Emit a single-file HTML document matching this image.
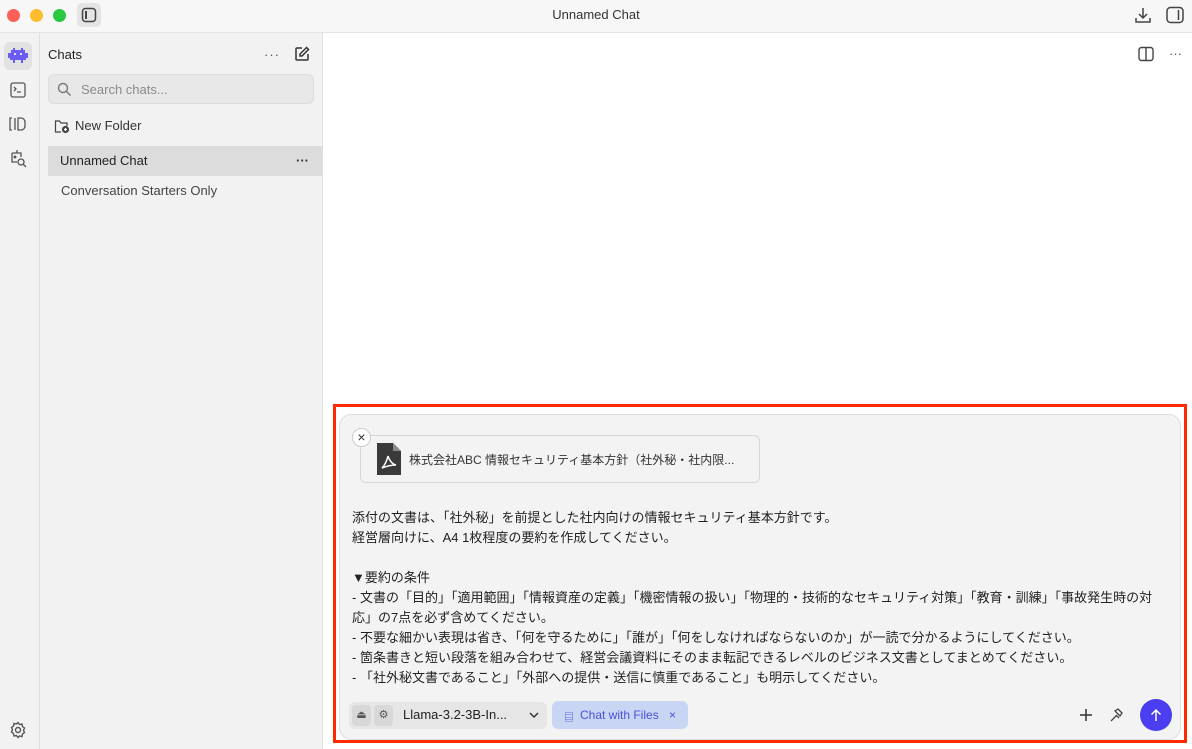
<!DOCTYPE html>
<html><head><meta charset="utf-8"><style>
*{box-sizing:border-box;margin:0;padding:0}
body{width:1192px;height:749px;overflow:hidden;background:#fff;font-family:"Liberation Sans","Noto Sans CJK JP",sans-serif;color:#222;position:relative;font-size:13px}
.abs{position:absolute}
.tb{left:0;top:0;width:1192px;height:33px;background:#f7f7f7;border-bottom:1px solid #e4e4e4}
.dot{width:13px;height:13px;border-radius:50%;top:9px}
.rail{left:0;top:33px;width:40px;height:716px;background:#f2f2f2;border-right:1px solid #e0e0e0}
.side{left:40px;top:33px;width:283px;height:716px;background:#f2f2f2;border-right:1px solid #e0e0e0}
svg{display:block}
</style></head><body>
<div class="abs tb"></div>
<div class="abs dot" style="left:7px;background:#fe5f57"></div>
<div class="abs dot" style="left:30px;background:#febc2e"></div>
<div class="abs dot" style="left:53px;background:#28c840"></div>
<div class="abs" style="left:77px;top:3px;width:24px;height:24px;border-radius:5px;background:#e4e4e4"></div>
<svg class="abs" style="left:81px;top:7px" width="16" height="16"><rect x="1.5" y="1.5" width="13" height="13" rx="3" fill="none" stroke="#444" stroke-width="1.5"/><rect x="4" y="4" width="2" height="8" fill="#444"/></svg>
<div class="abs" style="left:0;width:1192px;top:7px;text-align:center;font-size:13px;color:#333">Unnamed Chat</div>
<svg class="abs" style="left:1134px;top:6px" width="18" height="18" fill="none" stroke="#444" stroke-width="1.5"><path d="M9 2v9M5 8l4 4 4-4M2 12v4h14v-4"/></svg>
<svg class="abs" style="left:1166px;top:6px" width="18" height="18" fill="none" stroke="#444" stroke-width="1.5"><rect x="1" y="1.5" width="16" height="15" rx="3.5"/><path d="M12.5 4v10"/></svg>

<div class="abs rail"></div>
<div class="abs" style="left:4px;top:42px;width:28px;height:28px;border-radius:6px;background:#e2e2e2"></div>
<svg class="abs" style="left:8px;top:47px" width="20" height="17" fill="#6b5cf6"><path d="M5 1h2v2h6V1h2v2h2v3h3v5h-2v2h-3v3h-2v-3H7v3H5v-3H2v-2H0V6h3V3h2zM6 6v2h2V6zm6 0v2h2V6z"/></svg>
<svg class="abs" style="left:10px;top:82px" width="16" height="16" fill="none" stroke="#555" stroke-width="1.3"><rect x="1" y="1" width="14" height="14" rx="2"/><path d="M4 5l2 2-2 2M7 10h4"/></svg>
<svg class="abs" style="left:8px;top:116px" width="20" height="16" fill="none" stroke="#555" stroke-width="1.3"><path d="M4 2H2v12h2M7 2v12M10 2h3a4 4 0 0 1 4 4v4a4 4 0 0 1-4 4h-3z"/></svg>
<svg class="abs" style="left:8px;top:148px" width="20" height="20" fill="none" stroke="#555" stroke-width="1.3"><path d="M9 2v3M4 5h9v4M4 5v9h5"/><circle cx="7" cy="9" r=".8"/><circle cx="13" cy="14" r="3"/><path d="M15 16l3 3"/></svg>
<svg class="abs" style="left:9px;top:721px" width="18" height="18" fill="none" stroke="#555" stroke-width="1.4"><circle cx="9" cy="9" r="2.5"/><path d="M9 1.5l1.5 2 2.5-.5.5 2.5 2 1.5-1 2.3 1 2.2-2 1.5-.5 2.5-2.5-.5L9 16.5l-1.5-2-2.5.5L4.5 12.5l-2-1.5 1-2.2-1-2.3 2-1.5L5 2.5l2.5.5z"/></svg>

<div class="abs side"></div>
<div class="abs" style="left:48px;top:47px;font-size:13px;color:#222">Chats</div>
<div class="abs" style="left:264px;top:47px;color:#555;letter-spacing:1px">···</div>
<svg class="abs" style="left:294px;top:46px" width="16" height="16" fill="none" stroke="#333" stroke-width="1.5"><path d="M8 2H3a1 1 0 0 0-1 1v10a1 1 0 0 0 1 1h10a1 1 0 0 0 1-1V8"/><path d="M12.5 1.5l2 2L8 10H6V8z"/></svg>
<div class="abs" style="left:48px;top:74px;width:266px;height:30px;border-radius:6px;background:#e8e8e8;border:1px solid #ddd"></div>
<svg class="abs" style="left:57px;top:82px" width="15" height="15" fill="none" stroke="#777" stroke-width="1.4"><circle cx="6" cy="6" r="4.5"/><path d="M9.5 9.5l4 4"/></svg>
<div class="abs" style="left:81px;top:82px;color:#8a8a8a">Search chats...</div>
<svg class="abs" style="left:54px;top:119px" width="16" height="15" fill="none" stroke="#444" stroke-width="1.2"><path d="M7 13H1.5V2h4l1.5 2h6v3"/><circle cx="11.5" cy="10.5" r="3" fill="#444"/><path d="M11.5 9v3M10 10.5h3" stroke="#fff"/></svg>
<div class="abs" style="left:75px;top:118px;color:#333">New Folder</div>
<div class="abs" style="left:48px;top:146px;width:274px;height:30px;background:#dcdcdc"></div>
<div class="abs" style="left:60px;top:153px;color:#222">Unnamed Chat</div>
<div class="abs" style="left:296px;top:153px;color:#333;font-weight:bold">···</div>
<div class="abs" style="left:61px;top:183px;color:#444">Conversation Starters Only</div>

<svg class="abs" style="left:1138px;top:46px" width="16" height="16" fill="none" stroke="#444" stroke-width="1.4"><rect x="1" y="1.5" width="14" height="13" rx="2.5"/><path d="M8 1.5v13"/></svg>
<div class="abs" style="left:1169px;top:46px;color:#555">···</div>

<div class="abs" style="left:333px;top:404px;width:854px;height:339px;border:3px solid #ff2a00"></div>
<div class="abs" style="left:339px;top:414px;width:842px;height:326px;border-radius:12px;background:#f3f3f3;border:1px solid #dedede"></div>
<div class="abs" style="left:360px;top:435px;width:400px;height:48px;border-radius:6px;border:1px solid #d6d6d6;background:#f3f3f3"></div>
<div class="abs" style="left:352px;top:428px;width:19px;height:19px;border-radius:50%;background:#fff;border:1px solid #ccc;text-align:center;line-height:16px;font-size:14px;color:#333">×</div>
<svg class="abs" style="left:377px;top:443px" width="24" height="32"><path d="M0 0h16l8 8v24H0z" fill="#3a3a3a"/><path d="M16 0v8h8" fill="#888"/><path d="M5 25c3-3 5-8 6-12 1 4 4 8 8 9-4 0-9 1-14 3z" fill="none" stroke="#fff" stroke-width="1.5"/></svg>
<div class="abs" style="left:409px;top:451px;font-size:12px;color:#333">株式会社ABC 情報セキュリティ基本方針（社外秘・社内限...</div>
<div class="abs" style="left:352px;top:508px;width:808px;font-size:13px;line-height:20px;color:#222">添付の文書は、「社外秘」を前提とした社内向けの情報セキュリティ基本方針です。<br>経営層向けに、A4 1枚程度の要約を作成してください。<br><br>▼要約の条件<br>- 文書の「目的」「適用範囲」「情報資産の定義」「機密情報の扱い」「物理的・技術的なセキュリティ対策」「教育・訓練」「事故発生時の対応」の7点を必ず含めてください。<br>- 不要な細かい表現は省き、「何を守るために」「誰が」「何をしなければならないのか」が一読で分かるようにしてください。<br>- 箇条書きと短い段落を組み合わせて、経営会議資料にそのまま転記できるレベルのビジネス文書としてまとめてください。<br>- 「社外秘文書であること」「外部への提供・送信に慎重であること」も明示してください。</div>

<div class="abs" style="left:349px;top:702px;width:198px;height:27px;border-radius:6px;background:#e6e6e6"></div>
<div class="abs" style="left:352px;top:705px;width:19px;height:21px;border-radius:4px;background:#d8d8d8;text-align:center;font-size:11px;line-height:21px;color:#555">⏏</div>
<div class="abs" style="left:374px;top:705px;width:19px;height:21px;border-radius:4px;background:#d8d8d8;text-align:center;font-size:11px;line-height:21px;color:#555">⚙</div>
<div class="abs" style="left:403px;top:707px;color:#222">Llama-3.2-3B-In...</div>
<svg class="abs" style="left:528px;top:710px" width="12" height="10" fill="none" stroke="#333" stroke-width="1.5"><path d="M2 3l4 4 4-4"/></svg>
<div class="abs" style="left:552px;top:701px;width:136px;height:28px;border-radius:6px;background:#c9d6f3"></div>
<div class="abs" style="left:564px;top:709px;font-size:10px;color:#4c50d8">▤</div>
<div class="abs" style="left:580px;top:708px;font-size:12px;color:#4c50d8">Chat with Files</div>
<div class="abs" style="left:669px;top:708px;font-size:12px;color:#4c50d8">×</div>
<svg class="abs" style="left:1079px;top:708px" width="14" height="14" stroke="#333" stroke-width="1.5"><path d="M7 1v12M1 7h12"/></svg>
<svg class="abs" style="left:1108px;top:707px" width="16" height="16" fill="none" stroke="#444" stroke-width="1.3"><path d="M3 14l6-6M7 4l3-2 4 4-2 3-5-5zM9 9l2 2"/></svg>
<div class="abs" style="left:1140px;top:699px;width:32px;height:32px;border-radius:50%;background:#4a3ef0"></div>
<svg class="abs" style="left:1149px;top:708px" width="14" height="14" fill="none" stroke="#fff" stroke-width="1.5"><path d="M7 13V2M2.5 6.5L7 2l4.5 4.5"/></svg>
</body></html>
